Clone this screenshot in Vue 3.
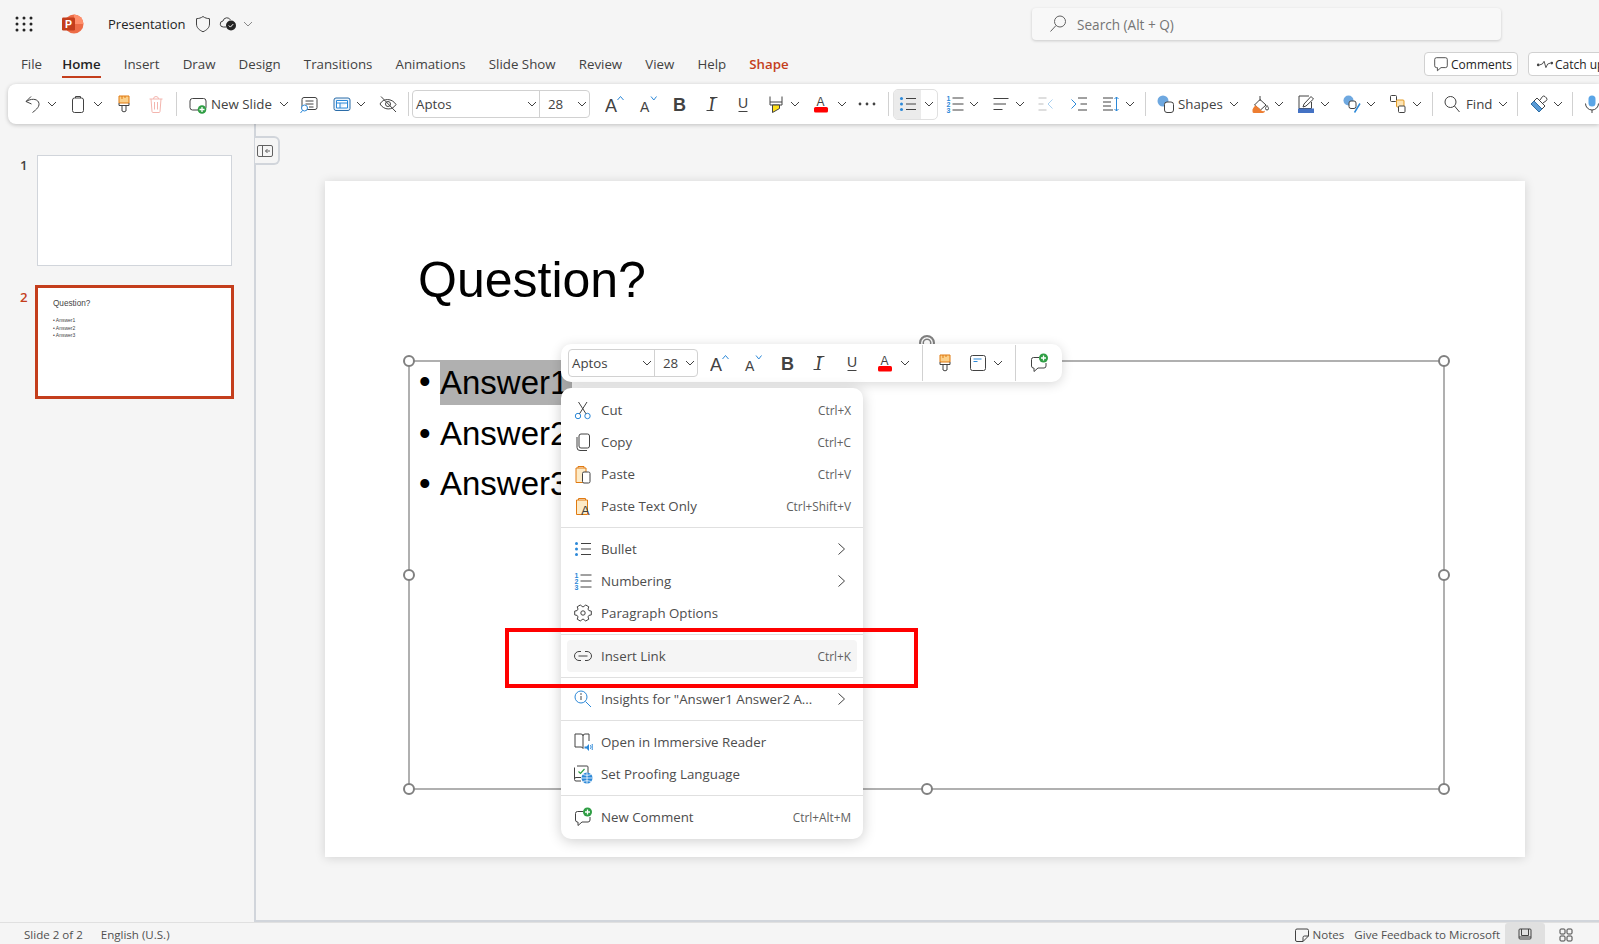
<template>
  <div class="app">
    <header class="titlebar">
      <svg class="waffle" width="18" height="16" viewBox="0 0 18 16">
        <g fill="#242424">
          <template v-for="y in [2, 8, 14]" :key="y">
            <circle v-for="x in [2, 9, 16]" :key="x" :cx="x" :cy="y" r="1.5" />
          </template>
        </g>
      </svg>
      <svg class="logo" width="22" height="20" viewBox="0 0 22 20">
        <circle cx="12" cy="10" r="9.5" fill="#ed6c47" />
        <path d="M12 .5a9.5 9.5 0 0 1 9.5 9.5H12z" fill="#ff8f6b" />
        <rect x="0" y="3.5" width="13" height="13" rx="1.2" fill="#c43e1c" />
        <text x="6.5" y="14" text-anchor="middle" font-size="10.5" font-weight="700" font-family="Liberation Sans" fill="#fff">P</text>
      </svg>
      <span class="doc-name">Presentation</span>
      <svg class="ico" width="20" height="20" viewBox="0 0 20 20" v-html="icons.shield"></svg>
      <svg class="ico cloud" width="20" height="20" viewBox="0 0 20 20" v-html="icons.cloud"></svg>
      <svg class="ico title-chev" width="10" height="20" viewBox="0 0 10 20" v-html="icons.chev"></svg>
      <div class="search">
        <svg width="20" height="20" viewBox="0 0 20 20" v-html="icons.searchFlip"></svg>
        <span>Search (Alt + Q)</span>
      </div>
    </header>

    <nav class="tabs">
      <span v-for="tab in tabs" :key="tab" class="tab" :class="{ active: tab === 'Home', shape: tab === 'Shape' }">{{ tab }}</span>
      <button class="pill comments">
        <svg width="18" height="18" viewBox="0 0 20 20" v-html="icons.bubble"></svg>
        Comments
      </button>
      <button class="pill catch">
        <svg width="18" height="18" viewBox="0 0 20 20" v-html="icons.pulse"></svg>
        Catch up
      </button>
    </nav>

    <div class="ribbon">
      <template v-for="(it, n) in ribbonItems" :key="n">
        <i v-if="it.sep" class="sep" :style="{ marginLeft: it.ml + 'px' }"></i>
        <div v-else-if="it.combo" class="combo" :style="{ marginLeft: it.ml + 'px', width: it.w + 'px' }">
          <div class="combo-font" :style="{ width: it.fontW + 'px' }">Aptos<svg width="10" height="20" viewBox="0 0 10 20" v-html="icons.chev"></svg></div>
          <div class="combo-size">28<svg width="10" height="20" viewBox="0 0 10 20" v-html="icons.chev"></svg></div>
        </div>
        <div v-else-if="it.split" class="split" :style="{ marginLeft: it.ml + 'px' }">
          <div class="split-on"><svg width="20" height="20" viewBox="0 0 20 20" v-html="icons.bullets"></svg></div>
          <svg class="split-chev" width="10" height="20" viewBox="0 0 10 20" v-html="icons.chev"></svg>
        </div>
        <span v-else-if="it.text" class="rb-text" :style="{ marginLeft: it.ml + 'px', width: it.w + 'px' }">{{ it.text }}</span>
        <svg v-else class="ico" :style="{ marginLeft: it.ml + 'px' }" :width="it.w" height="20" :viewBox="`0 0 ${it.w} 20`" v-html="icons[it.icon]"></svg>
      </template>
    </div>

    <main class="main">
      <aside class="pane">
        <div class="thumb-row">
          <span class="num">1</span>
          <div class="thumb-wrap"><div class="thumb plain"></div></div>
        </div>
        <div class="thumb-row">
          <span class="num red">2</span>
          <div class="thumb-wrap">
            <div class="thumb current">
              <p class="mini-q">Question?</p>
              <p class="mini-a">• Answer1</p>
              <p class="mini-a">• Answer2</p>
              <p class="mini-a">• Answer3</p>
            </div>
          </div>
        </div>
      </aside>

      <section class="canvas">
        <div class="collapse">
          <svg width="16" height="14" viewBox="0 0 16 14">
            <rect x=".5" y="1.5" width="15" height="11" rx="1.5" fill="none" stroke="#616161" />
            <path d="M5.5 1.5v11" stroke="#616161" />
            <path d="M13 7H8.5M10.5 5 8.5 7l2 2" fill="none" stroke="#616161" />
          </svg>
        </div>
        <div class="slide">
          <h1 class="slide-title">Question?</h1>
          <div class="frame">
            <i class="rotate"></i>
            <i v-for="h in handles" :key="h" class="handle" :class="h"></i>
            <ul class="answers">
              <li><span class="dot">•</span><span class="picked">Answer1</span></li>
              <li><span class="dot">•</span>Answer2</li>
              <li><span class="dot">•</span>Answer3</li>
            </ul>
          </div>
        </div>
      </section>
    </main>

    <footer class="status">
      <span class="st-slide">Slide 2 of 2</span>
      <span class="st-lang">English (U.S.)</span>
      <svg class="st-note" width="16" height="16" viewBox="0 0 16 16">
        <path d="M3 2h10a1.5 1.5 0 0 1 1.5 1.5V9L9 14.500H3A1.500 1.500 0 0 1 1.500 13V3.500A1.500 1.500 0 0 1 3 2zM14.500 9H10.500A1.500 1.500 0 0 0 9 10.500v4" fill="none" stroke="#424242" />
      </svg>
      <span class="st-notes">Notes</span>
      <span class="st-feedback">Give Feedback to Microsoft</span>
      <div class="st-view">
        <svg width="14" height="14" viewBox="0 0 14 14"><rect x="1" y="2" width="12" height="10" rx="1" fill="none" stroke="#424242" /><path d="M3.500 2v6.500h7V2M1 10h12" fill="none" stroke="#424242" /></svg>
      </div>
      <svg class="st-grid" width="14" height="14" viewBox="0 0 14 14">
        <g fill="none" stroke="#424242"><rect x="1" y="1" width="5" height="5" rx="1" /><rect x="8" y="1" width="5" height="5" rx="1" /><rect x="1" y="8" width="5" height="5" rx="1" /><rect x="8" y="8" width="5" height="5" rx="1" /></g>
      </svg>
    </footer>

    <div class="minibar">
      <template v-for="(it, n) in miniItems" :key="n">
        <i v-if="it.sep" class="sep tall" :style="{ marginLeft: it.ml + 'px' }"></i>
        <div v-else-if="it.combo" class="combo" :style="{ marginLeft: it.ml + 'px', width: it.w + 'px' }">
          <div class="combo-font" :style="{ width: it.fontW + 'px' }">Aptos<svg width="10" height="20" viewBox="0 0 10 20" v-html="icons.chev"></svg></div>
          <div class="combo-size">28<svg width="10" height="20" viewBox="0 0 10 20" v-html="icons.chev"></svg></div>
        </div>
        <svg v-else class="ico" :style="{ marginLeft: it.ml + 'px' }" :width="it.w" height="20" :viewBox="`0 0 ${it.w} 20`" v-html="icons[it.icon]"></svg>
      </template>
    </div>

    <div class="menu">
      <template v-for="(group, g) in menu" :key="g">
        <hr v-if="g" class="rule" />
        <div v-for="row in group" :key="row.label" class="row" :class="{ hover: row.hover }">
          <svg width="20" height="20" viewBox="0 0 20 20" v-html="icons[row.icon]"></svg>
          <span class="label">{{ row.label }}</span>
          <span v-if="row.keys" class="keys">{{ row.keys }}</span>
          <svg v-if="row.sub" class="sub" width="12" height="20" viewBox="0 0 12 20">
            <path d="M2.500 4.500 8.500 10l-6 5.500" fill="none" stroke="#424242" />
          </svg>
        </div>
      </template>
    </div>

    <div class="callout"></div>
  </div>
</template>

<script setup>
const tabs = ["File", "Home", "Insert", "Draw", "Design", "Transitions", "Animations", "Slide Show", "Review", "View", "Help", "Shape"];

const handles = ["tl", "tr", "bl", "br", "ml", "mr", "bm"];

const ink = 'fill="none" stroke="#424242"';
const blue = "#2b88d8";

// settings gear, six wide lobes
function gear() {
  const pts = [];
  for (let k = 0; k < 6; k++) {
    const a = k * 60;
    pts.push([a - 13, 8.5], [a + 13, 8.5], [a + 22, 6.4], [a + 38, 6.4]);
  }
  return (
    "M" +
    pts
      .map(([deg, r]) => {
        const t = (deg * Math.PI) / 180;
        return `${(10 + r * Math.cos(t)).toFixed(1)} ${(10 + r * Math.sin(t)).toFixed(1)}`;
      })
      .join("L") +
    "z"
  );
}

const letter = (ch, x, y, size, extra = "") =>
  `<text x="${x}" y="${y}" font-size="${size}" font-family="Liberation Sans" fill="#424242" ${extra}>${ch}</text>`;

const icons = {
  chev: `<path d="M1 8l4 4 4-4" ${ink}/>`,
  shield: `<path d="M10 2.500c2 1.500 4 2 6.500 2.200V10c0 3.800-2.700 6-6.500 7.800C6.200 16 3.500 13.800 3.500 10V4.700C6 4.500 8 4 10 2.500z" ${ink}/>`,
  cloud: `<path d="M8 13H5.500a3 3 0 0 1-.5-6 4 4 0 0 1 7.500-1" ${ink}/><circle cx="13" cy="11.500" r="5" fill="#242424"/><path d="M10.800 11.500l1.600 1.600 2.800-3" fill="none" stroke="#fff"/>`,
  searchFlip: `<circle cx="12" cy="7.500" r="5.500" fill="none" stroke="#616161"/><path d="M8 11.500 2.500 17.500" stroke="#616161"/>`,
  bubble: `<path d="M5 3h10a2 2 0 0 1 2 2v7a2 2 0 0 1-2 2h-5l-4 3.500V14H5a2 2 0 0 1-2-2V5a2 2 0 0 1 2-2z" ${ink}/>`,
  pulse: `<circle cx="2.500" cy="11" r="1.500" fill="#424242"/><circle cx="17.500" cy="9" r="1.500" fill="#424242"/><path d="M4 11l3-1 2-3 2 7 2-4 3-1" ${ink}/>`,
  undo: `<path d="M8 2.500 3 7.500l5.500 2.500M3 7.500c5-3 10.500-3 12.500.5 2 4-2 7.500-6 10.500" ${ink}/>`,
  clip: `<rect x="4.500" y="4" width="11" height="14.500" rx="2" ${ink}/><path d="M7.500 4V2.500h5V4" ${ink}/>`,
  brush: `<path d="M5 2h10v7H5z" fill="#fbd08a" stroke="#e07a10"/><path d="M8 2v3M11 2v2" stroke="#e07a10"/><path d="M5 9v2.500h10V9M8 11.500V17q2 1.800 4 0v-5.500" ${ink}/>`,
  trash: `<g fill="none" stroke="#f3b5ae"><path d="M3.500 5h13M7.500 5a2.500 2.500 0 0 1 5 0M5 5l1 12.500q.1 1 1 1h6q.9 0 1-1L15 5M8.500 8v7.500M11.500 8v7.500"/></g>`,
  newSlide: `<rect x="2" y="4.500" width="16" height="11.500" rx="2.500" ${ink}/><circle cx="14" cy="15.500" r="4.300" fill="#2f9e44"/><path d="M14 13v5M11.500 15.500h5" stroke="#fff" stroke-width="1.300"/>`,
  reuse: `<rect x="3" y="3.500" width="15" height="12" rx="2" ${ink}/><path d="M6.500 7h8M6.500 10h8M10 13h4.500" ${ink}/><circle cx="5.500" cy="14" r="3" fill="#fff" stroke="${blue}"/><path d="M3.500 16.500 1.500 19" stroke="${blue}"/>`,
  layout: `<rect x="2" y="4" width="16" height="12.500" rx="2" fill="#eaf3fb" stroke="#2b6ca8"/><path d="M4.500 6.500h11v2.500h-11zM4.500 9v5h3.500V9M8 14h7.500V9" fill="#fff" stroke="${blue}"/>`,
  hide: `<path d="M2 10c3-6 12-6 16 .5-3.500 6-12 6-16-.5z" ${ink}/><circle cx="10" cy="10" r="2.500" ${ink}/><path d="M3 2.500 18 18" ${ink}/>`,
  grow: letter("A", 0, 17.500, 18) + `<path d="M12.500 6l3-3.500 3 3.500" fill="none" stroke="${blue}"/>`,
  shrink: letter("A", 2, 17.500, 14) + `<path d="M13 2.500l2.800 3.500 2.700-3.500" fill="none" stroke="${blue}"/>`,
  bold: letter("B", 4, 16.500, 18, 'font-weight="700"'),
  italic: `<text x="6.500" y="16.500" font-size="18" font-style="italic" font-family="Liberation Serif" fill="#424242">I</text><path d="M8 3.500h7.500M4.500 16.500h7" ${ink}/>`,
  under: letter("U", 5, 14, 14) + `<path d="M5.500 17.500h9" ${ink}/>`,
  high: `<path d="M4 2.500v5.500h12V2.500" ${ink}/><path d="M4 8v3h12V8" ${ink}/><path d="M6.500 11h7v3.500l-7 4z" fill="#ffe01a" stroke="#424242"/>`,
  colorA: letter("A", 5.500, 12, 12) + `<rect x="3" y="13" width="14" height="5.500" rx="1.500" fill="#f00"/>`,
  dots: `<g fill="#424242"><circle cx="3" cy="10" r="1.400"/><circle cx="10" cy="10" r="1.400"/><circle cx="17" cy="10" r="1.400"/></g>`,
  bullets: `<g fill="${blue}"><circle cx="3.500" cy="4.500" r="1.500"/><circle cx="3.500" cy="10" r="1.500"/><circle cx="3.500" cy="15.500" r="1.500"/></g><path d="M8 4.500h10M8 10h10M8 15.500h10" ${ink}/>`,
  numbers: `<g font-size="7" font-weight="700" font-family="Liberation Sans" fill="${blue}"><text x="1.500" y="6.500">1</text><text x="1.500" y="12.500">2</text><text x="1.500" y="18.500">3</text></g><path d="M7.500 4h11M7.500 10h11M7.500 16h11" ${ink}/>`,
  align: `<path d="M2.500 4.500h15M2.500 10h12.500M2.500 15.500h9" ${ink}/>`,
  outdent: `<path d="M2.500 4h8M2.500 10h5M2.500 16h8" fill="none" stroke="#bdbdbd"/><path d="M16.500 5.500 12 10l4.500 4.500" fill="none" stroke="#a9d0f0"/>`,
  indent: `<path d="M9 4h9M11.500 10h6.500M9 16h9" ${ink}/><path d="M2.500 5.500 7 10l-4.500 4.500" fill="none" stroke="${blue}"/>`,
  spacing: `<path d="M2 4h10M2 8h8M2 12h8M2 16h10" ${ink}/><path d="M15.500 3v14M13.500 5l2-2 2 2M13.500 15l2 2 2-2" fill="none" stroke="${blue}"/>`,
  shapes: `<circle cx="7" cy="7" r="5.500" fill="#6ea8e0"/><rect x="8.500" y="8" width="9" height="10.500" rx="2.500" fill="#fff" stroke="#424242"/>`,
  fill: `<path d="M10 2v5M10 5.500 16 11l-5.500 5L4.500 11z" ${ink}/><path d="M2.500 15.500q2-4 3.500-4l6 5.500q2 .5 3-.5 0 2-2 2.500H4q-1.500 0-1.500-1.500z" fill="#ed7d31"/><path d="M17 11.500c1 1.500 1.500 2.300 1.500 3a1.500 1.500 0 0 1-3 0c0-.7.500-1.500 1.500-3z" ${ink}/>`,
  outline: `<path d="M15.500 8v6.500H3V2h10" ${ink}/><path d="M7 13l1-3 7-7.500 2.500 2.500-7.500 7z" fill="#fff" stroke="#424242"/><rect x="2" y="14.500" width="16" height="4.500" fill="#4472c4"/>`,
  effects: `<circle cx="6.500" cy="6.500" r="5" fill="#6ea8e0"/><rect x="7" y="7" width="7" height="7.500" rx="2" fill="#fff" stroke="#424242"/><path d="M18 9.500 12.500 18.500" stroke="${blue}" stroke-width="1.500"/>`,
  arrange: `<rect x="2.500" y="1.500" width="6" height="6" rx="1" ${ink}/><rect x="8.500" y="6" width="7.500" height="7" rx="1" fill="#fde4b4" stroke="#e39a22"/><rect x="10.500" y="12" width="6.500" height="6.500" rx="1" fill="#fff" stroke="#424242"/>`,
  find: `<circle cx="8.500" cy="8" r="5.500" ${ink}/><path d="M12.500 12l5 6" ${ink}/>`,
  eraser: `<path d="M11 6l2.500-3.500q1-1 2.500 0l1.500 1.500q1 1.500 0 2.500L14 9" fill="#fff" stroke="#424242"/><path d="M8 4l8 8-6 6-8-8z" fill="#fff" stroke="#424242"/><path d="M5 7 2 10l8 8 3-3z" fill="#5b9bd5" stroke="#2e6da4"/>`,
  mic: `<rect x="6.500" y="1.500" width="7" height="11" rx="3.500" fill="#5aa5e6"/><path d="M3.500 9.500a6.500 6.500 0 0 0 13 0M10 16v3" ${ink}/>`,
  comment: `<path d="M10 4.500H4.500a2 2 0 0 0-2 2V13a2 2 0 0 0 2 2h.5v3.500L9 15h6a2 2 0 0 0 2-2v-3" ${ink}/><circle cx="14.500" cy="5" r="4.500" fill="#2f9e44"/><path d="M14.500 2.500v5M12 5h5" stroke="#fff" stroke-width="1.300"/>`,
  textbox: `<rect x="2.500" y="2.500" width="15" height="15" rx="2" ${ink}/><path d="M5.500 6h8M5.500 8.500h4" stroke="${blue}" stroke-width="1.200"/>`,
  cut: `<circle cx="5" cy="16" r="2.700" fill="none" stroke="${blue}"/><circle cx="14.500" cy="16" r="2.700" fill="none" stroke="${blue}"/><path d="M6.500 13.800 14 2M13 13.800 5.500 2" ${ink}/>`,
  copy: `<rect x="6" y="2" width="10.500" height="14" rx="2" ${ink}/><path d="M4 5v10.500A3 3 0 0 0 7 18.500h7" ${ink}/>`,
  paste: `<path d="M3 4h10v14.500H3z" fill="#fdebc8" stroke="#e07a10"/><path d="M5 4V2.500h6V4" fill="none" stroke="#e07a10"/><rect x="9.500" y="8" width="7.500" height="11" rx="1.500" fill="#fff" stroke="#424242"/>`,
  pasteText: `<path d="M3.500 4h11v14.500h-11z" fill="#fdebc8" stroke="#e07a10"/><path d="M5.500 4V2.500h7V4" fill="none" stroke="#e07a10"/>` + letter("A", 8, 19, 13),
  gear: `<path d="${gear()}" fill="none" stroke="#424242" stroke-linejoin="round"/><circle cx="10" cy="10" r="2.200" ${ink}/>`,
  link: `<path d="M8 5.500H6a4.500 4.500 0 0 0 0 9h2M12 5.500h2a4.500 4.500 0 0 1 0 9h-2M5.500 10h9" ${ink}/>`,
  insights: `<circle cx="8" cy="8" r="6" fill="none" stroke="${blue}"/><path d="M12.500 12.500 18 18" stroke="${blue}"/><path d="M8 7v4" stroke="#424242"/><circle cx="8" cy="5" r=".8" fill="#424242"/>`,
  reader: `<path d="M10 4a2 2 0 0 0-2-2H2v13h6a2 2 0 0 1 2 1.500V4a2 2 0 0 1 2-2h4v7" ${ink}/><path d="M11.500 14.500h2l2.500-2.500v7l-2.500-2.500h-2z" fill="${blue}"/><path d="M17.500 13c.8 1.300.8 2.700 0 4M19 12c1.200 2 1.200 4 0 6" fill="none" stroke="${blue}"/>`,
  proofing: `<path d="M4 2h10a1 1 0 0 1 1 1v6M8 17H3a1.500 1.500 0 0 1-1.500-1.500v-12M1.500 15A1.500 1.500 0 0 1 3 13.500h5" ${ink}/><path d="M5.500 7.500l2 2 4-4.500" fill="none" stroke="#2f9e44" stroke-width="1.200"/><circle cx="14" cy="14" r="5.500" fill="${blue}"/><path d="M8.500 14h11M14 8.500v11M10 10.500c2.500 1 5.500 1 8 0M10 17.500c2.500-1 5.500-1 8 0" fill="none" stroke="#fff" stroke-width=".8"/>`,
};

// every item is given by the middle of its ink; the gap in front of it follows from that
function flow(items, start) {
  let x = start;
  return items.map((raw) => {
    const it = { ...raw };
    it.w = it.w ?? (it.icon === "chev" ? 10 : it.sep ? 1 : 20);
    it.ml = it.at - it.w / 2 - x;
    x = it.at + it.w / 2;
    return it;
  });
}

const c = (at) => ({ icon: "chev", at });
const i = (icon, at) => ({ icon, at });
const sep = (at) => ({ sep: true, at });

const ribbonItems = flow(
  [
    i("undo", 32.5), c(51.5), i("clip", 77.5), c(97.5), i("brush", 123.5), i("trash", 155.5), sep(176.5),
    i("newSlide", 197.5), { text: "New Slide", at: 242, w: 62 }, c(283.5), i("reuse", 309), i("layout", 341.5), c(360.5), i("hide", 387.5), sep(408),
    { combo: true, at: 501, w: 178, fontW: 127 },
    i("grow", 615), i("shrink", 647.5), i("bold", 679), i("italic", 711.5), i("under", 743), i("high", 775.5), c(794.5), i("colorA", 821), c(841.5), i("dots", 866.5), sep(888),
    { split: true, at: 915.5, w: 45 },
    i("numbers", 954.5), c(974), i("align", 1000.5), c(1019.5), i("outdent", 1046), i("indent", 1078.5), i("spacing", 1110.5), c(1130), sep(1145),
    i("shapes", 1165.5), { text: "Shapes", at: 1200, w: 44 }, c(1233.5), i("fill", 1260), c(1279), i("outline", 1305.5), c(1325), i("effects", 1351.5), c(1370.5), i("arrange", 1397.5), c(1417), sep(1432),
    i("find", 1452), { text: "Find", at: 1479, w: 26 }, c(1502.5), sep(1517), i("eraser", 1538.5), c(1557.5), sep(1572), i("mic", 1592),
  ],
  8
);

const miniItems = flow(
  [
    { combo: true, at: 633, w: 130, fontW: 86 },
    i("grow", 720), i("shrink", 753), i("bold", 786.5), i("italic", 819), i("under", 852), i("colorA", 885), c(904.5), sep(922),
    i("brush", 945), i("textbox", 978), c(998), sep(1015), i("comment", 1038.5),
  ],
  561
);

const menu = [
  [
    { icon: "cut", label: "Cut", keys: "Ctrl+X" },
    { icon: "copy", label: "Copy", keys: "Ctrl+C" },
    { icon: "paste", label: "Paste", keys: "Ctrl+V" },
    { icon: "pasteText", label: "Paste Text Only", keys: "Ctrl+Shift+V" },
  ],
  [
    { icon: "bullets", label: "Bullet", sub: true },
    { icon: "numbers", label: "Numbering", sub: true },
    { icon: "gear", label: "Paragraph Options" },
  ],
  [{ icon: "link", label: "Insert Link", keys: "Ctrl+K", hover: true }],
  [{ icon: "insights", label: 'Insights for "Answer1 Answer2 A...', sub: true }],
  [
    { icon: "reader", label: "Open in Immersive Reader" },
    { icon: "proofing", label: "Set Proofing Language" },
  ],
  [{ icon: "comment", label: "New Comment", keys: "Ctrl+Alt+M" }],
];
</script>

<style scoped>
.app {
  position: relative;
  height: 100vh;
  display: flex;
  flex-direction: column;
  overflow: hidden;
  background: #f5f5f5;
  color: #424242;
  font-family: "Open Sans", "Liberation Sans", sans-serif;
  font-size: 13.3px;
}

.ico {
  flex: none;
  display: block;
}

.titlebar {
  height: 48px;
  flex: none;
  display: flex;
  align-items: center;
}

.waffle {
  margin-left: 15px;
}

.logo {
  margin-left: 29px;
}

.doc-name {
  margin-left: 24px;
  width: 85px;
  font-size: 13px;
  color: #242424;
}

.ico.cloud {
  margin-left: 5px;
}

.ico.title-chev {
  margin-left: 5px;
}

.title-chev {
  opacity: 0.6;
}

.search {
  margin-left: auto;
  margin-right: 98px;
  width: 469px;
  height: 32px;
  box-sizing: border-box;
  display: flex;
  align-items: center;
  gap: 9px;
  padding-left: 16px;
  background: #f8f8f8;
  border-radius: 4px;
  box-shadow: 0 1px 3px rgba(0, 0, 0, 0.18);
  color: #757575;
  font-size: 13.600px;
}

.tabs {
  height: 36px;
  flex: none;
  box-sizing: border-box;
  display: flex;
  align-items: flex-start;
  gap: 23.100px;
  padding: 6px 0 0 21px;
}

.tab {
  line-height: 20px;
  padding-bottom: 2px;
  border-bottom: 2px solid transparent;
  white-space: nowrap;
}

.tab.active {
  font-weight: 600;
  color: #242424;
  border-bottom-color: #c43e1c;
  margin-left: -3px;
}

.tab.shape {
  font-weight: 600;
  color: #c43e1c;
}

.pill {
  height: 24px;
  margin-top: -2px;
  box-sizing: border-box;
  display: flex;
  align-items: center;
  gap: 1px;
  padding: 0 0 0 7px;
  background: #fff;
  border: 1px solid #d1d1d1;
  border-radius: 4px;
  color: #242424;
  font: inherit;
  font-size: 12px;
  white-space: nowrap;
  flex: none;
}

.comments {
  margin-left: auto;
  width: 94px;
}

.catch {
  width: 92px;
  margin-left: -13.100px;
  margin-right: -21px;
}

.ribbon {
  height: 40px;
  flex: none;
  margin-left: 8px;
  display: flex;
  align-items: center;
  background: #fff;
  border-radius: 8px 0 0 8px;
  box-shadow: 0 1px 4px rgba(0, 0, 0, 0.22);
  position: relative;
  z-index: 2;
  overflow: hidden;
}

.sep {
  flex: none;
  width: 1px;
  height: 24px;
  background: #d1d1d1;
}

.sep.tall {
  height: 36px;
}

.rb-text {
  flex: none;
  white-space: nowrap;
  line-height: 20px;
}

.combo {
  flex: none;
  display: flex;
  height: 28px;
  box-sizing: border-box;
  border: 1px solid #d1d1d1;
  border-radius: 4px;
  background: #fff;
}

.combo-font,
.combo-size {
  display: flex;
  align-items: center;
  justify-content: space-between;
  box-sizing: border-box;
  white-space: nowrap;
}

.combo-font {
  padding: 0 2px 0 3px;
  border-right: 1px solid #d1d1d1;
  flex: none;
}

.combo-size {
  flex: 1;
  padding: 0 2px 0 8px;
}

.split {
  flex: none;
  width: 45px;
  height: 31px;
  box-sizing: border-box;
  display: flex;
  align-items: center;
  border: 1px solid #e0e0e0;
  border-radius: 5px;
  overflow: hidden;
}

.split-on {
  width: 27px;
  height: 100%;
  display: flex;
  align-items: center;
  justify-content: center;
  background: #ebebeb;
}

.split-chev {
  margin-left: 3px;
}

.main {
  flex: 1;
  min-height: 0;
  display: flex;
}

.pane {
  width: 254px;
  flex: none;
  box-sizing: border-box;
  padding: 29px 0 0 20px;
  display: flex;
  flex-direction: column;
  gap: 18px;
}

.thumb-row {
  display: flex;
}

.num {
  width: 15px;
  margin-top: 2px;
  font-weight: 600;
  line-height: 20px;
}

.num.red {
  color: #c43e1c;
}

.thumb-wrap {
  width: 199px;
  height: 114px;
  display: flex;
  align-items: center;
  justify-content: center;
}

.thumb {
  background: #fff;
  box-sizing: border-box;
}

.thumb.plain {
  width: 195px;
  height: 111px;
  border: 1px solid #d1d5db;
}

.thumb.current {
  width: 199px;
  height: 114px;
  border: 3px solid #c43e1c;
  padding: 11px 0 0 15px;
  font-family: "Liberation Sans", sans-serif;
  color: #444;
}

.mini-q {
  margin: 0 0 8px;
  font-size: 8.200px;
  line-height: 10px;
}

.mini-a {
  margin: 0;
  font-size: 5px;
  line-height: 7.500px;
}

.canvas {
  flex: 1;
  position: relative;
  border-left: 2px solid #d1d5db;
  border-bottom: 2px solid #d1d5db;
  padding: 57px 0 0 69px;
}

.collapse {
  position: absolute;
  left: -1px;
  top: 12px;
  width: 25px;
  height: 29px;
  box-sizing: border-box;
  display: flex;
  align-items: center;
  justify-content: center;
  padding-right: 4px;
  background: #f5f5f5;
  border: 2px solid #d1d5db;
  border-left: 0;
  border-radius: 0 6px 6px 0;
}

.slide {
  position: relative;
  width: 1200px;
  height: 676px;
  background: #fff;
  box-shadow: 0 1px 10px rgba(0, 0, 0, 0.14);
  font-family: "Liberation Sans", Arial, sans-serif;
  color: #000;
}

.slide-title {
  position: absolute;
  left: 93px;
  top: 70px;
  margin: 0;
  font-size: 50px;
  font-weight: 400;
  line-height: 58px;
}

.frame {
  position: absolute;
  left: 83px;
  top: 179px;
  width: 1037px;
  height: 430px;
  box-sizing: border-box;
  border: 2px solid #b0b0b0;
}

.answers {
  list-style: none;
  margin: -5px 0 0;
  padding: 0 0 0 9px;
  font-size: 33px;
  line-height: 50.500px;
}

.answers li {
  display: flex;
}

.answers li + li {
  position: relative;
  top: 1px;
}

.dot {
  width: 21px;
  flex: none;
}

.picked {
  background: #b0b0b0;
  padding: 4px 4px 4px 0;
  line-height: 37px;
  align-self: center;
}

.handle {
  position: absolute;
  width: 12px;
  height: 12px;
  box-sizing: border-box;
  border: 2px solid #808080;
  border-radius: 50%;
  background: #fff;
  z-index: 1;
}

.handle.tl { left: -7px; top: -7px; }
.handle.tr { right: -7px; top: -7px; }
.handle.bl { left: -7px; bottom: -7px; }
.handle.br { right: -7px; bottom: -7px; }
.handle.ml { left: -7px; top: calc(50% - 6px); }
.handle.mr { right: -7px; top: calc(50% - 6px); }
.handle.bm { left: calc(50% - 6px); bottom: -7px; }

.rotate {
  position: absolute;
  left: calc(50% - 8px);
  top: -27px;
  width: 16px;
  height: 16px;
  box-sizing: border-box;
  border: 2px solid #808080;
  border-radius: 50%;
  box-shadow: inset 0 0 0 1.500px #fff, inset 0 0 0 3px #808080;
}

.status {
  height: 22px;
  flex: none;
  box-sizing: border-box;
  padding-top: 2px;
  border-top: 1px solid #e0e0e0;
  display: flex;
  align-items: center;
  font-size: 11.550px;
  color: #505050;
  white-space: nowrap;
}

.st-slide {
  margin-left: 24px;
}

.st-lang {
  margin-left: 18px;
}

.st-note {
  margin-left: auto;
}

.st-notes {
  margin-left: 3px;
}

.st-feedback {
  margin-left: 10px;
}

.st-view {
  width: 40px;
  height: 21px;
  margin-left: 5px;
  margin-top: -2px;
  display: flex;
  align-items: center;
  justify-content: center;
  background: #e0e0e0;
  border-radius: 3px 3px 0 0;
}

.st-grid {
  margin: 0 26px 0 14px;
}

.minibar {
  position: absolute;
  left: 561px;
  top: 344px;
  width: 501px;
  height: 38px;
  display: flex;
  align-items: center;
  background: #fff;
  border-radius: 10px;
  box-shadow: 0 2px 12px rgba(0, 0, 0, 0.16);
  z-index: 3;
}

.menu {
  position: absolute;
  left: 561px;
  top: 388px;
  width: 302px;
  box-sizing: border-box;
  padding: 6px;
  background: #fff;
  border-radius: 10px;
  box-shadow: 0 2px 14px rgba(0, 0, 0, 0.2);
  z-index: 3;
}

.row {
  height: 32px;
  box-sizing: border-box;
  display: flex;
  align-items: center;
  padding: 0 6px;
  border-radius: 4px;
}

.row.hover {
  background: #f5f5f5;
}

.label {
  margin-left: 8px;
  flex: 1;
  white-space: nowrap;
  color: #4d4d4d;
}

.keys {
  font-size: 11.800px;
  color: #616161;
}

.sub {
  margin-right: 3px;
}

.rule {
  margin: 5px -6px;
  border: 0;
  border-top: 1px solid #e0e0e0;
}

.callout {
  position: absolute;
  left: 505px;
  top: 628px;
  width: 413px;
  height: 60px;
  box-sizing: border-box;
  border: 4px solid #f00;
  z-index: 4;
}
</style>

<style>
html,
body {
  margin: 0;
  overflow: hidden;
}
</style>
